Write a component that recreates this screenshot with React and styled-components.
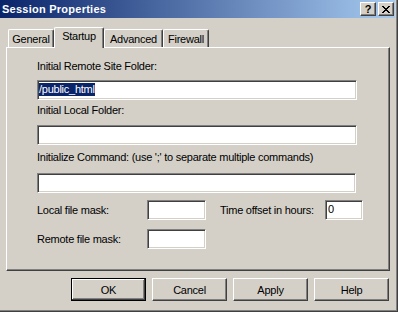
import styled, { createGlobalStyle } from "styled-components"

const GlobalStyle = createGlobalStyle`
  html, body {
    margin: 0;
    padding: 0;
    background: #d4d0c8;
    overflow: hidden;
  }
  body {
    font-family: "Liberation Sans", Arial, sans-serif;
    font-size: 11px;
    color: #000;
  }
`;

const Window = styled.div`
  box-sizing: border-box;
  width: 401px;
  height: 315px;
  margin: -3px 0 0 -3px;
  padding: 3px;
  background: #d4d0c8;
  box-shadow: inset -1px -1px #404040, inset 1px 1px #d4d0c8,
    inset -2px -2px #808080, inset 2px 2px #fff;
  display: flex;
  flex-direction: column;
`;

const TitleBar = styled.div`
  height: 18px;
  display: flex;
  align-items: center;
  justify-content: space-between;
  padding: 0 1px 0 2px;
  background: linear-gradient(to right, #0a246a, #a6caf0);
`;

const Title = styled.span`
  color: #fff;
  font-weight: bold;
  font-size: 11px;
  letter-spacing: 0.25px;
`;

const Controls = styled.div`
  display: flex;
  gap: 2px;
`;

const CaptionButton = styled.div`
  box-sizing: border-box;
  width: 16px;
  height: 14px;
  display: flex;
  align-items: center;
  justify-content: center;
  background: #d4d0c8;
  border: 1px solid;
  border-color: #fff #404040 #404040 #fff;
  box-shadow: inset -1px -1px #808080;
  font-weight: bold;
  font-size: 11px;
  line-height: 11px;
`;

const Body = styled.div`
  display: flex;
  flex-direction: column;
  padding: 9px 0 0 6px;
`;

const TabRow = styled.div`
  display: flex;
  align-items: flex-end;
  height: 20px;
  padding-left: 2px;
  position: relative;
  z-index: 1;
`;

const Tab = styled.div`
  box-sizing: border-box;
  width: ${(p) => p.$w}px;
  height: ${(p) => (p.$active ? 21 : 18)}px;
  margin-bottom: ${(p) => (p.$active ? -1 : 0)}px;
  padding-top: ${(p) => (p.$active ? 2 : 3)}px;
  text-align: center;
  line-height: 13px;
  letter-spacing: -0.25px;
  background: #d4d0c8;
  border: 1px solid;
  border-bottom: none;
  border-color: #fff #404040 #404040 #fff;
  border-radius: 2px 2px 0 0;
  box-shadow: inset -1px 0 #808080;
`;

const Panel = styled.div`
  box-sizing: border-box;
  width: 384px;
  height: 224px;
  padding: 0 0 0 30px;
  display: flex;
  flex-direction: column;
  align-items: flex-start;
  border: 1px solid;
  border-color: #fff #404040 #404040 #fff;
  box-shadow: inset -1px -1px #808080;
`;

const Label = styled.div`
  line-height: 13px;
  letter-spacing: -0.25px;
  white-space: nowrap;
  margin-top: ${(p) => p.$mt || 0}px;
  padding-left: ${(p) => p.$pl || 0}px;
  width: ${(p) => (p.$w ? `${p.$w}px` : "auto")};
`;

const Field = styled.div`
  box-sizing: border-box;
  width: ${(p) => p.$w}px;
  height: 20px;
  margin-top: ${(p) => p.$mt || 0}px;
  padding: 1px 0 0 0;
  background: #fff;
  border: 1px solid;
  border-color: #808080 #fff #fff #808080;
  box-shadow: inset 1px 1px #404040, inset -1px -1px #d4d0c8;
  line-height: 13px;
  letter-spacing: -0.25px;
  display: flex;
  align-items: flex-start;
`;

const Selected = styled.span`
  margin: 1px 0 0 1px;
  background: #0a246a;
  color: #fff;
`;

const Value = styled.span`
  margin: 1px 0 0 2px;
`;

const Row = styled.div`
  display: flex;
  align-items: center;
  margin-top: ${(p) => p.$mt || 0}px;
`;

const ButtonRow = styled.div`
  display: flex;
  gap: 6px;
  margin: 7px 0 0 65px;
`;

const Button = styled.div`
  box-sizing: border-box;
  width: 75px;
  height: 23px;
  display: flex;
  align-items: center;
  justify-content: center;
  background: #d4d0c8;
  letter-spacing: -0.25px;
  border: 1px solid;
  border-color: ${(p) => (p.$default ? "#000" : "#fff #404040 #404040 #fff")};
  box-shadow: ${(p) =>
    p.$default
      ? "inset -1px -1px #404040, inset 1px 1px #fff, inset -2px -2px #808080"
      : "inset -1px -1px #808080"};
`;

const CloseIcon = () => (
  <svg width="8" height="7" viewBox="0 0 8 7" shapeRendering="crispEdges">
    <path
      d="M0 0h2v1h-2zM6 0h2v1h-2zM1 1h2v1h-2zM5 1h2v1h-2zM2 2h4v1h-4zM3 3h2v1h-2zM2 4h4v1h-4zM1 5h2v1h-2zM5 5h2v1h-2zM0 6h2v1h-2zM6 6h2v1h-2z"
      fill="#000"
    />
  </svg>
);

const tabs = [
  { name: "General", w: 46 },
  { name: "Startup", w: 50, active: true },
  { name: "Advanced", w: 59 },
  { name: "Firewall", w: 46 },
];

export default function App() {
  return (
    <>
      <GlobalStyle />
      <Window>
        <TitleBar>
          <Title>Session Properties</Title>
          <Controls>
            <CaptionButton>?</CaptionButton>
            <CaptionButton>
              <CloseIcon />
            </CaptionButton>
          </Controls>
        </TitleBar>
        <Body>
          <TabRow>
            {tabs.map((t) => (
              <Tab key={t.name} $w={t.w} $active={t.active}>
                {t.name}
              </Tab>
            ))}
          </TabRow>
          <Panel>
            <Label $mt={12}>Initial Remote Site Folder:</Label>
            <Field $w={320} $mt={7}>
              <Selected>/public_html</Selected>
            </Field>
            <Label $mt={4}>Initial Local Folder:</Label>
            <Field $w={320} $mt={8} />
            <Label $mt={6}>Initialize Command: (use ';' to separate multiple commands)</Label>
            <Field $w={319} $mt={9} />
            <Row $mt={7}>
              <Label $w={110}>Local file mask:</Label>
              <Field $w={59} />
              <Label $w={105} $pl={14}>Time offset in hours:</Label>
              <Field $w={38}>
                <Value>0</Value>
              </Field>
            </Row>
            <Row $mt={9}>
              <Label $w={110}>Remote file mask:</Label>
              <Field $w={59} />
            </Row>
          </Panel>
          <ButtonRow>
            <Button $default>OK</Button>
            <Button>Cancel</Button>
            <Button>Apply</Button>
            <Button>Help</Button>
          </ButtonRow>
        </Body>
      </Window>
    </>
  );
}
